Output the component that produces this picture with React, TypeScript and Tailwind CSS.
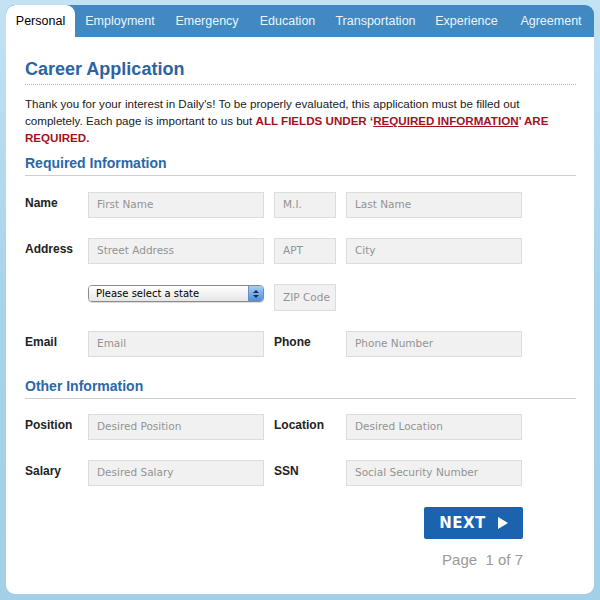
import React from "react";

const tabs: [string, string][] = [
  ["Personal", "w-[69px]"],
  ["Employment", "w-[90px]"],
  ["Emergency", "w-[84px]"],
  ["Education", "w-[77px]"],
  ["Transportation", "w-[99px]"],
  ["Experience", "w-[83px]"],
  ["Agreement", "w-[86px]"],
];

function Field({ placeholder, w }: { placeholder: string; w: string }) {
  return (
    <div
      className={`${w} h-[26px] shrink-0 bg-[#f1f1f1] border border-[#dcdcdc] pl-[8px] flex items-center text-[10.5px] text-[#939393] font-['DejaVu_Sans',sans-serif]`}
    >
      {placeholder}
    </div>
  );
}

function Label({ text, w = "w-[63px]" }: { text: string; w?: string }) {
  return (
    <div className={`${w} shrink-0 pt-[3px] text-[12px] leading-[16px] font-bold text-[#222]`}>{text}</div>
  );
}

function Section({ title }: { title: string }) {
  return (
    <div className="border-b border-[#cfcfcf] pb-[3px] text-[14px] leading-[18px] font-bold text-[#2a68a8]">
      {title}
    </div>
  );
}

function StateSelect() {
  return (
    <div className="w-[176px] h-[17px] shrink-0 flex rounded-[4px] border border-[#8a8a8a] overflow-hidden shadow-[0_1px_1px_rgba(0,0,0,0.15)]">
      <div className="flex-1 flex items-center pl-[7px] bg-gradient-to-b from-white to-[#e6e6e6] text-[10px] text-black font-['DejaVu_Sans',sans-serif]">
        Please select a state
      </div>
      <div className="w-[15px] flex flex-col items-center justify-center gap-[2px] bg-gradient-to-b from-[#a9cdf3] to-[#4a8ee0] border-l border-[#6a8fc0]">
        <svg width="6" height="3" viewBox="0 0 6 3"><path d="M0 3 L3 0 L6 3 Z" fill="#1c2c44" /></svg>
        <svg width="6" height="3" viewBox="0 0 6 3"><path d="M0 0 L6 0 L3 3 Z" fill="#1c2c44" /></svg>
      </div>
    </div>
  );
}

export default function App() {
  return (
    <div className="w-[600px] h-[600px] pt-[5px] px-[6px] bg-gradient-to-b from-[#c3e2f3] via-[#a8d3ea] to-[#a3cfe7] font-['Liberation_Sans',Arial,sans-serif]">
      <div className="w-[588px]">
        <div className="flex h-[32px] bg-[#4189c1] rounded-t-[9px] overflow-hidden">
          {tabs.map(([t, w], i) => (
            <div
              key={t}
              className={
                i === 0
                  ? `${w} shrink-0 flex items-center justify-center bg-white text-black text-[12.5px] rounded-t-[9px]`
                  : `${w} shrink-0 flex items-center justify-center text-[#eef4fa] text-[12.5px]`
              }
            >
              {t}
            </div>
          ))}
        </div>

        <div className="h-[557px] bg-white rounded-b-[9px] pl-[19px] pr-[18px] pt-[21px]">
          <div className="pb-[4px] border-b border-dotted border-[#b8b8b8] text-[18px] leading-[22px] font-bold text-[#2b63a6]">
            Career Application
          </div>

          <p className="mt-[10px] text-[11.6px] leading-[17px] text-[#1a1a1a]">
            Thank you for your interest in Daily's! To be properly evaluated, this application must be filled out
            completely. Each page is important to us but{" "}
            <span className="font-bold text-[#a3121c]">
              ALL FIELDS UNDER ‘<span className="underline">REQUIRED INFORMATION</span>’ ARE REQUIRED.
            </span>
          </p>

          <div className="mt-[8px]">
            <Section title="Required Information" />
          </div>

          <div className="mt-[16px] flex flex-col gap-[20px]">
            <div className="flex items-start">
              <Label text="Name" />
              <Field placeholder="First Name" w="w-[176px]" />
              <div className="ml-[10px]">
                <Field placeholder="M.I." w="w-[62px]" />
              </div>
              <div className="ml-[10px]">
                <Field placeholder="Last Name" w="w-[176px]" />
              </div>
            </div>
            <div className="flex items-start">
              <Label text="Address" />
              <Field placeholder="Street Address" w="w-[176px]" />
              <div className="ml-[10px]">
                <Field placeholder="APT" w="w-[62px]" />
              </div>
              <div className="ml-[10px]">
                <Field placeholder="City" w="w-[176px]" />
              </div>
            </div>
            <div className="flex items-start">
              <div className="w-[63px] shrink-0" />
              <div className="pt-[1px]">
                <StateSelect />
              </div>
              <div className="ml-[10px]">
                <div className="w-[62px] h-[27px] bg-[#f1f1f1] border border-[#dcdcdc] pl-[8px] flex items-center text-[10.5px] text-[#939393] font-['DejaVu_Sans',sans-serif]">
                  ZIP Code
                </div>
              </div>
            </div>
            <div className="flex items-start">
              <Label text="Email" />
              <Field placeholder="Email" w="w-[176px]" />
              <div className="ml-[10px] flex">
                <Label text="Phone" w="w-[72px]" />
                <Field placeholder="Phone Number" w="w-[176px]" />
              </div>
            </div>
          </div>

          <div className="mt-[20px]">
            <Section title="Other Information" />
          </div>

          <div className="mt-[15px] flex flex-col gap-[20px]">
            <div className="flex items-start">
              <Label text="Position" />
              <Field placeholder="Desired Position" w="w-[176px]" />
              <div className="ml-[10px] flex">
                <Label text="Location" w="w-[72px]" />
                <Field placeholder="Desired Location" w="w-[176px]" />
              </div>
            </div>
            <div className="flex items-start">
              <Label text="Salary" />
              <Field placeholder="Desired Salary" w="w-[176px]" />
              <div className="ml-[10px] flex">
                <Label text="SSN" w="w-[72px]" />
                <Field placeholder="Social Security Number" w="w-[176px]" />
              </div>
            </div>
          </div>

          <div className="w-[498px] flex flex-col items-end">
            <div className="mt-[21px] w-[99px] h-[32px] rounded-[2px] bg-[#1b63ae] flex items-center justify-center gap-[12px]">
              <span className="text-[15px] font-bold tracking-[0.5px] text-white font-['DejaVu_Sans',sans-serif]">NEXT</span>
              <svg width="10" height="12" viewBox="0 0 10 12"><path d="M0 0 L10 6 L0 12 Z" fill="white" /></svg>
            </div>
            <div className="mt-[12px] text-[15px] leading-[18px] text-[#9a9a9a] whitespace-pre">Page  1 of 7</div>
          </div>
        </div>
      </div>
    </div>
  );
}
